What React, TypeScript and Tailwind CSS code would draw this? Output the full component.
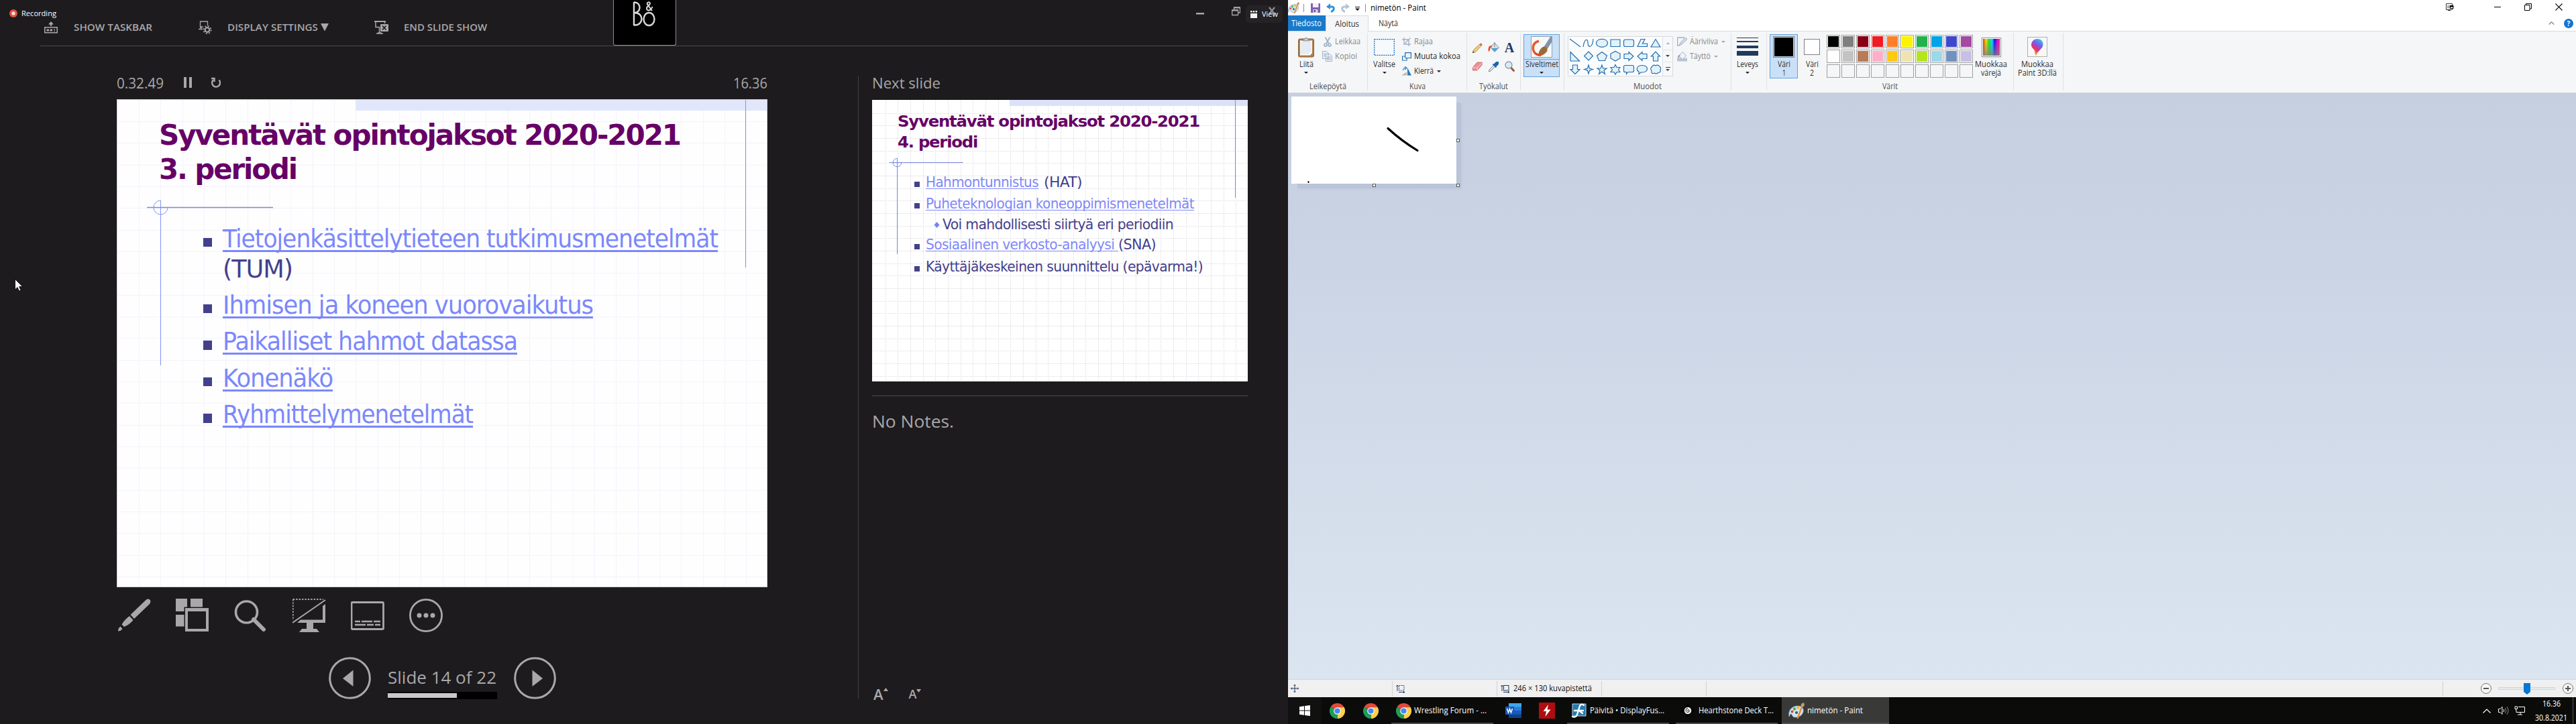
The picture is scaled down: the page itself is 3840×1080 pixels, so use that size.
import React, { useLayoutEffect, useRef, useState } from "react";

/* Text squeezed or stretched horizontally so that it fills exactly `w` pixels. */
function T({ w, className = "", children }: { w: number; className?: string; children: React.ReactNode }) {
  const ref = useRef<HTMLSpanElement>(null);
  const [scale, setScale] = useState(1);
  useLayoutEffect(() => {
    if (ref.current && ref.current.offsetWidth) {
      const range = document.createRange();
      range.selectNodeContents(ref.current);
      const natural = range.getBoundingClientRect().width;
      if (natural) setScale((s) => (w * s) / natural);
    }
  }, [w]);
  return (
    <span className="inline-block shrink-0 whitespace-pre" style={{ width: w }}>
      <span ref={ref} className={`inline-block origin-left whitespace-pre ${className}`} style={{ transform: `scaleX(${scale})` }}>
        {children}
      </span>
    </span>
  );
}

/* ------------------------------ slides ------------------------------ */

function SlideBackdrop({ small = false }: { small?: boolean }) {
  const W = small ? 560 : 970;
  const H = small ? 420 : 728;
  const step = small ? 18.67 : 32.33;
  const off = small ? 19.5 : 33;
  const vs = Array.from({ length: 29 }, (_, i) => Math.round(off + i * step) + 0.5).filter((v) => v < W);
  const hs = Array.from({ length: 22 }, (_, i) => Math.round(off + i * step) + 0.5).filter((v) => v < H);
  const grid = small ? "#dcdce2" : "#f3f3fb";
  const dash = small ? "1 1" : undefined;
  const cx = small ? 37.5 : 65.5;
  const cy = small ? 93.5 : 161.5;
  const r = small ? 6.3 : 10.5;
  const line = small ? "#7d8fe8" : "#8492f5";
  return (
    <svg className={small ? "absolute left-0 top-0" : "absolute -left-px -top-px"} width={W} height={H} viewBox={`0 0 ${W} ${H}`} fill="none">
      <defs>
        <pattern id="dither" width="2" height="2" patternUnits="userSpaceOnUse">
          <rect width="2" height="2" fill="#eef2fd" />
          <rect width="1" height="1" fill="#c6d2f3" />
          <rect x="1" y="1" width="1" height="1" fill="#c6d2f3" />
        </pattern>
      </defs>
      {vs.map((v) => <path key={`v${v}`} d={`M${v} 0V${H}`} stroke={grid} strokeDasharray={dash} />)}
      {hs.map((v) => <path key={`h${v}`} d={`M0 ${v}H${W}`} stroke={grid} strokeDasharray={dash} />)}
      {small ? <rect x="205" width="355" height="9" fill="url(#dither)" /> : <rect x="356" width="614" height="17" fill="#e1e6fb" />}
      <path d={small ? "M541.5 0V146" : "M937.5 0V251"} stroke={line} />
      <path d={small ? "M25.5 93.5H135.5" : "M45 161.5H233"} stroke="#7c88de" strokeWidth={small ? 1 : 1.5} />
      <path d={`M${cx} ${cy - r}V${small ? 230 : 397}`} stroke={line} />
      <path d={`M${cx} ${cy - r}A${r} ${r} 0 1 0 ${cx + r} ${cy}`} stroke={line} />
    </svg>
  );
}

function Bullet({ w, link, tail, tailW = 0 }: { w: number; link?: string; tail?: string; tailW?: number }) {
  return (
    <li className="flex">
      <span className="mr-4 mt-[21px] h-[13.5px] w-[13px] shrink-0 bg-[#44408c]" />
      <span className="flex flex-col">
        <T w={w} className="text-[#7b88fa] underline decoration-[#7b88fa] decoration-[2.6px] underline-offset-[4px] [text-decoration-skip-ink:none]">{link}</T>
        {tail && <T w={tailW}>{tail}</T>}
      </span>
    </li>
  );
}

function CurrentSlide() {
  return (
    <div className="relative mt-[15px] h-[728px] w-[970px] overflow-hidden border border-[#cfced2] bg-[#fefeff]">
      <SlideBackdrop />
      <div className="relative pl-[64px] pt-[27px] font-['DejaVu_Sans'] text-[#660066]">
        <h1 className="-ml-[2px] flex flex-col text-[43px] font-bold leading-[51px] tracking-[-0.05em]">
          <T w={777}>Syventävät opintojaksot 2020-2021</T>
          <T w={205}>3. periodi</T>
        </h1>
        <ul className="mt-[55.5px] flex flex-col gap-[9.4px] pl-[64px] text-[37px] leading-[45px] tracking-[-0.03em] text-[#44408c]">
          <Bullet w={738} link="Tietojenkäsittelytieteen tutkimusmenetelmät" tail="(TUM)" tailW={104} />
          <Bullet w={552} link="Ihmisen ja koneen vuorovaikutus" />
          <Bullet w={439} link="Paikalliset hahmot datassa" />
          <Bullet w={164} link="Konenäkö" />
          <Bullet w={373} link="Ryhmittelymenetelmät" />
        </ul>
      </div>
    </div>
  );
}

const smallLink = "text-[#7f88f8] underline decoration-1 underline-offset-[2px] [text-decoration-skip-ink:none]";

function SmallBullet() {
  return <span className="mr-[9px] mt-[12px] h-2 w-2 shrink-0 bg-[#44408c]" />;
}

function NextSlide() {
  return (
    <div className="relative mt-4 h-[420px] w-[560px] overflow-hidden bg-white">
      <SlideBackdrop small />
      <div className="relative pl-[38px] pt-[17px] font-['DejaVu_Sans'] text-[#660066]">
        <h2 className="flex flex-col text-[23.5px] font-bold leading-[30.6px] tracking-[-0.05em]">
          <T w={450}>Syventävät opintojaksot 2020-2021</T>
          <T w={119}>4. periodi</T>
        </h2>
        <ul className="mt-[31.5px] pl-[25px] text-[22px] leading-[26px] tracking-[-0.03em] text-[#44408c]">
          <li className="flex h-8"><SmallBullet /><T w={168} className={smallLink}>Hahmontunnistus</T><span className="w-2" /><T w={57}>(HAT)</T></li>
          <li className="flex h-[31px]"><SmallBullet /><T w={400} className={smallLink}>Puheteknologian koneoppimismenetelmät</T></li>
          <li className="flex h-[30px] pl-[29px] text-[21px]">
            <svg className="mr-1 mt-[9px]" width="9" height="9" viewBox="0 0 8 9"><path d="M4 0L8 4.5L4 9L0 4.5Z" fill="#6f86f5" /></svg>
            <T w={344}>Voi mahdollisesti siirtyä eri periodiin</T>
          </li>
          <li className="flex h-[33px]"><SmallBullet /><T w={287} className={smallLink}>{"Sosiaalinen verkosto-analyysi "}</T><T w={56}>(SNA)</T></li>
          <li className="flex"><SmallBullet /><T w={413}>Käyttäjäkeskeinen suunnittelu (epävarma!)</T></li>
        </ul>
      </div>
    </div>
  );
}

/* -------------------------- presenter view -------------------------- */

const G = "#a9a7a9";

function PresenterHeader() {
  return (
    <header className="relative flex h-[68px] justify-between">
      <div className="flex h-[51px] items-end pl-[66px] text-[14.5px] font-semibold leading-5 text-[#a9a7a9]">
        <svg width="20" height="20" viewBox="0 0 20 20" fill={G} className="mr-6">
          <path d="M10 1L14 5.5H11V8H9V5.5H6Z" />
          <path d="M0 9H20V18.500H0ZM1.500 10.500V17H18.500V10.500Z" fillRule="evenodd" />
          <path d="M3.500 12.500H7V15.500H3.500ZM8.500 12.500H12V15.500H8.500ZM14.500 12H16V13.500H14.500ZM14.500 14.500H16V16H14.500Z" />
        </svg>
        <T w={117}>SHOW TASKBAR</T>
        <svg width="20" height="20" viewBox="0 0 20 20" className="ml-[69px] mr-[23px]" fill="none" stroke={G}>
          <path d="M7 9H2.500V1H13.500V7" strokeWidth="1.300" />
          <path d="M0 12.500H6M2 10.500L5 10.500" strokeWidth="1.500" />
          <circle cx="13" cy="13.500" r="3.300" strokeWidth="2.200" />
          <circle cx="13" cy="13.500" r="5.600" strokeWidth="1.800" strokeDasharray="2 2.400" />
        </svg>
        <T w={135}>DISPLAY SETTINGS</T>
        <svg width="12" height="12" viewBox="0 0 12 12" className="mb-1 ml-1"><path d="M0 0H12L6 11.500Z" fill={G} /></svg>
        <svg width="22" height="20" viewBox="0 0 22 20" className="ml-[68px] mr-[22px]" fill="none" stroke={G}>
          <path d="M0 1H17" strokeWidth="2" />
          <path d="M2 1V9.500H8M15.500 2V4M7.500 9.500V18M3 19H13M5 18H11" strokeWidth="1.500" />
          <rect x="9" y="5" width="12" height="11" rx="1" fill={G} stroke="none" />
          <path d="M12 7.500L17.500 13.500M17.500 7.500L12 13.500" stroke="#1d1b1e" strokeWidth="1.700" />
        </svg>
        <T w={124}>END SLIDE SHOW</T>
      </div>
      <div className="flex items-start gap-10 pr-[19px] pt-[10px]">
        <svg width="13" height="14" viewBox="0 0 13 14"><rect y="9" width="12" height="2.500" fill={G} /></svg>
        <svg width="13" height="14" viewBox="0 0 13 14" fill="none" stroke={G} strokeWidth="1.300" className="mr-[2px]">
          <path d="M3.500 4V1H12.500V9H9.500" /><path d="M3.500 1.500H12.500" strokeWidth="2" /><path d="M.7 5H9.500V12.500H.7Z" /><path d="M.7 5.500H9.500" strokeWidth="2" />
        </svg>
        <svg width="10" height="12" viewBox="0 0 10 12"><path d="M1 1L9 11M9 1L1 11" stroke="#8d8b8e" strokeWidth="2.200" /></svg>
      </div>

      {/* screen-sharing overlays */}
      <div className="absolute left-[14px] top-[12px] flex h-4 items-center gap-[6px] text-[11px] leading-4 text-white">
        <span className="h-3 w-3 rounded-full bg-[radial-gradient(circle,#ffe3dd_0_22%,#e2503f_40%_75%,#a83a30_100%)]" />
        <T w={52}>Recording</T>
      </div>
      <div className="absolute right-[8px] top-[8px] flex h-[26px] w-[55px] items-center rounded-md bg-[#ffffff0a] pl-[7px] text-[11px] text-white">
        <svg width="10" height="11" viewBox="0 0 10 11" fill="#f2f2f2" className="mr-[7px]"><path d="M0 0H2.500V2.500H0ZM3.700 0H6.200V2.500H3.700ZM7.500 0H10V2.500H7.500ZM0 4H10V11H0Z" /></svg>
        <T w={24}>View</T>
      </div>
      <div className="absolute left-[914px] top-0 h-[68px] w-[94px] rounded-b-[3px] border border-t-0 border-[#8c8c8c] bg-black">
        <svg width="92" height="67" viewBox="0 0 92 67" fill="none" stroke="#d8d8d8" strokeWidth="2.400">
          <path d="M30 3V38M30 3.500H31C41 3.500 41 19 31 19H30M31 19C45 19 45 37.500 31 37.500H30" />
          <ellipse cx="52.500" cy="28.500" rx="8" ry="9.500" />
          <path d="M57 16L50 6.500C48.500 3 54.500 2 54 5.500C53.500 8 48.500 9 49 13C49.500 17 55.500 16 57.500 10" strokeWidth="2" />
        </svg>
      </div>
    </header>
  );
}

function PresenterTools() {
  return (
    <div className="ml-px mt-[17px] flex h-[50px] items-center gap-[37px]">
      <svg width="50" height="50" viewBox="0 0 50 50" fill={G}>
        <path d="M43 1.500Q47-1 49 2.500Q50 5 48 8L25 30L19.500 24Z" />
        <path d="M18 26L23.500 32Q18 39 10 42L6.500 38.500Q10 32 18 26Z" /><path d="M4.500 41.500L7.500 45Q5 48.500 1 48.500Q1 44 4.500 41.500Z" />
      </svg>
      <svg width="50" height="50" viewBox="0 0 50 50" fill={G}>
        <path d="M0 0H17V12.500H12.500V19H0ZM22 0H40V12.500H22ZM0 24H12.500V41.500H0Z" />
        <path d="M14 14H49V49H14ZM18 19V45H45V19Z" fillRule="evenodd" />
      </svg>
      <svg width="50" height="50" viewBox="0 0 50 50" fill="none" stroke={G}>
        <circle cx="18.500" cy="20" r="16" strokeWidth="3.600" /><path d="M29 31L44 46" strokeWidth="6" strokeLinecap="round" />
      </svg>
      <svg width="50" height="50" viewBox="0 0 50 50" fill={G}>
        <path d="M.8 1H46M.8 1V32" stroke={G} strokeWidth="1.800" strokeDasharray="2.400 2" fill="none" />
        <path d="M0 36L49 2" stroke={G} strokeWidth="2" />
        <path d="M49 8V36H31V45H36L40 50H10L14 45H21V36H7L12 31.500H45V11Z" />
      </svg>
      <svg width="50" height="50" viewBox="0 0 50 50" fill="none" stroke={G}>
        <rect x="1" y="5.500" width="47.500" height="40" rx="1.500" strokeWidth="2.800" />
        <path d="M6 34H14M16 34H32M34 34H44M6 39H22M24 39H34M36 39H44" strokeWidth="2.400" />
      </svg>
      <svg width="50" height="50" viewBox="0 0 50 50" fill={G}>
        <circle cx="25" cy="25" r="23.600" fill="none" stroke={G} strokeWidth="2.800" />
        <circle cx="15" cy="25" r="3.500" /><circle cx="25" cy="25" r="3.500" /><circle cx="35" cy="25" r="3.500" />
      </svg>
    </div>
  );
}

function PresenterNav() {
  return (
    <div className="ml-[316px] mt-[37px] flex h-[63px] items-center gap-[25px]">
      <svg width="63" height="63" viewBox="0 0 63 63"><circle cx="31.500" cy="31.500" r="29.800" fill="none" stroke={G} strokeWidth="3" /><path d="M36.500 19.500V44L21 32Z" fill={G} /></svg>
      <div className="flex h-full w-[163px] flex-col text-[25px] leading-[30px] text-[#a9a7a9]">
        <div className="mt-[15px] h-[37px]"><T w={162}>Slide 14 of 22</T></div>
        <div className="h-[11px] bg-black py-[2px]"><div className="h-[7px] w-[103px] bg-[#c9c7c9]" /></div>
      </div>
      <svg width="63" height="63" viewBox="0 0 63 63"><circle cx="31.500" cy="31.500" r="29.800" fill="none" stroke={G} strokeWidth="3" /><path d="M27.500 19.500V44L43 32Z" fill={G} /></svg>
    </div>
  );
}

function Presenter() {
  return (
    <section className="relative h-[1080px] w-[1920px] shrink-0 overflow-hidden bg-[#1d1b1e]">
      <PresenterHeader />
      <div className="ml-[60px] h-px w-[1800px] bg-[#4c4a4d]" />
      <div className="flex h-[1011px] text-[#a9a7a9]">
        <main className="w-[1279px] shrink-0 pl-[174px] pt-[44px]">
          <div className="flex h-5 w-[970px] items-center text-[22px] leading-5">
            <T w={70}>0.32.49</T>
            <span className="ml-[30px] h-4 w-1 bg-[#a9a7a9]" /><span className="ml-1 h-4 w-1 bg-[#a9a7a9]" />
            <svg width="15" height="17" viewBox="0 0 15 17" className="ml-7" fill="none" stroke={G} strokeWidth="2.400"><path d="M12.500 4.500A6 6 0 1 1 4 4.200" /><path d="M1 2H5.500V7" /></svg>
            <span className="ml-auto flex"><T w={51}>16.36</T></span>
          </div>
          <CurrentSlide />
          <PresenterTools />
          <PresenterNav />
        </main>
        <div className="mt-[45px] h-[928px] w-px bg-[#444245]" />
        <aside className="flex flex-col items-start pb-[33px] pl-5 pt-[44px]">
          <div className="flex h-5 items-center text-[22px] leading-5"><T w={102}>Next slide</T></div>
          <NextSlide />
          <div className="mt-[21px] h-px w-[560px] bg-[#4c4a4d]" />
          <div className="mt-[22px] h-[30px] text-[26px] leading-[30px]"><T w={122}>No Notes.</T></div>
          <div className="mt-auto flex h-6 items-end gap-[31px] pl-[2px] font-semibold leading-6">
            <span className="flex text-[22px]">A<svg width="7" height="6" viewBox="0 0 7 6" className="mt-[3px]"><path d="M3.500 0L7 5H0Z" fill={G} /></svg></span>
            <span className="flex text-[18px]">A<svg width="7" height="6" viewBox="0 0 7 6" className="mt-[5px]"><path d="M3.500 5L7 0H0Z" fill={G} /></svg></span>
          </div>
        </aside>
      </div>
      <svg width="12" height="19" viewBox="0 0 12 19" className="absolute left-[22px] top-[416px]"><path d="M.5.5V16L4 12.600L6.500 18L9 17L6.600 11.600H11.500Z" fill="#fff" stroke="#000" strokeWidth=".8" /></svg>
    </section>
  );
}

/* ------------------------------ Paint ------------------------------- */

function PaletteIcon({ size }: { size: number }) {
  return (
    <svg width={size} height={size} viewBox="0 0 24 24" className="shrink-0">
      <path d="M1 21C-1 11 6 5 14 5C21 5 23 10 22 14C20 20 15 22 10 22C5 22 6 17 3.500 17C1.500 17 2.500 21 1 21Z" fill="#cfe6f4" stroke="#6da5c9" strokeWidth=".8" />
      <circle cx="5.500" cy="13.500" r="2" fill="#e0442e" /><circle cx="9" cy="9.500" r="2.200" fill="#4cae3f" /><circle cx="14.500" cy="7.500" r="2.200" fill="#f2b92b" /><circle cx="12" cy="15" r="2" fill="#34546c" />
      <path d="M13.500 24L20 6" stroke="#ea8a2e" strokeWidth="2.400" /><path d="M18.500 6L19 2L23 0L24 4L21.500 7Z" fill="#c69a6a" />
    </svg>
  );
}

function Caret({ color = "#222", className = "" }: { color?: string; className?: string }) {
  return <svg width="6" height="3" viewBox="0 0 6 3" className={`shrink-0 ${className}`}><path d="M0 0H6L3 3Z" fill={color} /></svg>;
}

function PaintTitle() {
  return (
    <div className="flex h-[23px] items-start justify-between bg-white">
      <div className="flex h-[23px] items-center">
        <PaletteIcon size={17} />
        <span className="ml-[6px] h-3 w-px bg-[#8d8d8d]" />
        <svg width="14" height="14" viewBox="0 0 14 14" className="ml-[10px] mt-px"><path d="M0 0H14V14H0Z" fill="#8361b4" /><path d="M3 0H11.500V6H3Z" fill="#f3f1f8" /><path d="M3.500 9H10.500V14H3.500Z" fill="#cfd8e6" /><path d="M5 10H7V13H5Z" fill="#55407c" /></svg>
        <svg width="14" height="14" viewBox="0 0 14 14" className="ml-[9px]" fill="none" stroke="#3094dc"><path d="M2 5H8.500C12.500 5 12.500 11 7 12.500" strokeWidth="3" /><path d="M6 0L0 5L6 9Z" fill="#3094dc" stroke="none" /></svg>
        <svg width="14" height="14" viewBox="0 0 14 14" className="ml-[7px]" fill="none" stroke="#b5c3d4"><path d="M12 5H5.500C1.500 5 1.500 11 7 12.500" strokeWidth="3" /><path d="M8 0L14 5L8 9Z" fill="#b5c3d4" stroke="none" /></svg>
        <svg width="7" height="6" viewBox="0 0 7 6" className="ml-2 mt-[3px]"><path d="M0 0H7V1H0ZM0 2.500H7L3.500 6Z" fill="#111" /></svg>
        <span className="ml-2 h-3 w-px bg-[#8d8d8d]" />
        <span className="ml-[7px] flex text-[12px] leading-4 text-black"><T w={83}>nimetön - Paint</T></span>
      </div>
      <div className="flex items-center pr-5 pt-[5px]">
        <svg width="12" height="11" viewBox="0 0 12 11" fill="none" stroke="#333"><path d="M.5.500H9.500V3M.5.500V9.500H9.500V8M3 10.500H7" /><path d="M3 3V7.500M5 3V7.500" strokeWidth=".8" /><rect x="6" y="3" width="5.500" height="5" fill="#000" stroke="none" /><path d="M7 5.500H10.500V7H7Z" fill="#fff" stroke="none" /></svg>
        <svg width="10" height="11" viewBox="0 0 10 11" className="ml-[60px]"><path d="M0 5.500H10" stroke="#000" /></svg>
        <svg width="11" height="11" viewBox="0 0 11 11" className="ml-[35px]" fill="none" stroke="#000"><path d="M.5 2.500H8V10.500H.5ZM2.500 2.500V.5H10.500V8H8" /></svg>
        <svg width="11" height="11" viewBox="0 0 11 11" className="ml-[35px]"><path d="M.5.500L10.500 10.500M10.500.500L.5 10.500" stroke="#000" strokeWidth="1.100" /></svg>
      </div>
    </div>
  );
}

function PaintTabs() {
  return (
    <div className="flex h-6 items-start border-b border-[#dadbdc] bg-white text-[12px] leading-[23px] text-[#303030]">
      <div className="flex h-[23px] w-14 bg-[#1979ca] pl-[5px] text-white"><T w={45}>Tiedosto</T></div>
      <div className="flex h-6 w-16 border border-b-0 border-[#dadbdc] bg-[#f5f6f7] pl-[13px]"><T w={36}>Aloitus</T></div>
      <div className="flex pl-[15px]"><T w={29}>Näytä</T></div>
      <div className="ml-auto flex h-[23px] items-center pr-1">
        <svg width="9" height="5" viewBox="0 0 9 5" className="mr-[14px]"><path d="M.7 4.500L4.500.700L8.300 4.500" fill="none" stroke="#8a8a8a" strokeWidth="1.300" /></svg>
        <span className="flex h-[14px] w-[14px] items-center justify-center rounded-full bg-[#1374d0] text-[10px] font-bold leading-3 text-white">?</span>
      </div>
    </div>
  );
}

function Group({ w, label, lw = 0, children }: { w: number; label?: string; lw?: number; children: React.ReactNode }) {
  return (
    <>
      <div className="flex h-[91px] shrink-0 flex-col" style={{ width: w }}>
        <div className="flex h-[74px]">{children}</div>
        <div className="flex h-4 justify-center leading-4 text-[#505050]">{label && <T w={lw}>{label}</T>}</div>
      </div>
      <div className="mt-[2px] h-[86px] w-px shrink-0 bg-[#dfe1e3]" />
    </>
  );
}

function Big({ w, lines, widths, caret = true, children }: { w: number; lines: string[]; widths: number[]; caret?: boolean; children: React.ReactNode }) {
  return (
    <div className="flex shrink-0 flex-col items-center pt-[6px] leading-[13px] text-[#303030]" style={{ width: w }}>
      <div className="mb-[2px] flex h-[34px] items-center justify-center">{children}</div>
      {lines.map((l, i) => <div key={l} className="flex h-[13px]"><T w={widths[i]}>{l}</T></div>)}
      {caret && <Caret className="mt-[5px]" />}
    </div>
  );
}

function Row({ icon, label, w, disabled, caret }: { icon: React.ReactNode; label: string; w: number; disabled?: boolean; caret?: boolean }) {
  return (
    <div className={`flex h-[22px] items-center leading-[22px] ${disabled ? "text-[#86888b]" : "text-[#262626]"}`}>
      <span className="mr-1 flex w-[15px] shrink-0 justify-center">{icon}</span>
      <T w={w}>{label}</T>
      {caret && <Caret className="ml-[5px]" color={disabled ? "#a5a7aa" : "#222"} />}
    </div>
  );
}

const SHAPES = [
  "M2 4L18 16", "M2 16C4 3 9 3 9 10C9 18 16 18 17 4", "M10 4.500A7.500 5.800 0 1 0 10 16A7.500 5.800 0 1 0 10 4.500Z", "M3 5H17V15.500H3Z",
  "M5 5H15Q17.500 5 17.500 7.500V13Q17.500 15.500 15 15.500H5Q2.500 15.500 2.500 13V7.500Q2.500 5 5 5Z", "M3 15.500L8 4.500H14L10.500 11H17.500V15.500Z", "M10 4.500L17 16H3Z",
  "M3 3.500V17H16.500Z", "M10 3L16.500 9.500L10 16L3.500 9.500Z", "M10 3.500L17.500 9L14.500 16.500H5.500L2.500 9Z", "M10 2.500L17 6V13L10 17L3 13V6Z",
  "M3 6.500H10V3.500L17 10L10 16.500V13.500H3Z", "M17 6.500H10V3.500L3 10L10 16.500V13.500H17Z", "M6.500 17V10H3.500L10 3L16.500 10H13.500V17Z",
  "M6.500 3V9.500H3L10 16.500L17 9.500H13.500V3Z", "M10 3L11.500 8L16.500 9.500L11.500 11L10 16L8.500 11L3.500 9.500L8.500 8Z", "M10 3L11.800 8H17L13 11L14.500 16.500L10 13L5.500 16.500L7 11L3 8H8.200Z",
  "M10 2.500L12 6.500H17L14.500 10L17 13.500H12L10 17L8 13.500H3L5.500 10L3 6.500H8Z", "M4.500 3.500H15.500Q17.500 3.500 17.500 5.500V11.500Q17.500 13.500 15.500 13.500H9L6.500 16.500V13.500H4.500Q2.500 13.500 2.500 11.500V5.500Q2.500 3.500 4.500 3.500Z",
  "M10 3.500C20 3.500 20 14 10 14L8 14L5 16.500V13C0 10 2 3.500 10 3.500Z", "M5 5Q7 2 10 4Q14 2 15.500 5Q19 7 17 10Q18 14 14 14.500Q11 17 8 15Q3 17 4 12Q1 8 5 5Z",
];

const TOP = ["bg-[#000000]", "bg-[#7f7f7f]", "bg-[#880015]", "bg-[#ed1c24]", "bg-[#ff7f27]", "bg-[#fff200]", "bg-[#22b14c]", "bg-[#00a2e8]", "bg-[#3f48cc]", "bg-[#a349a4]"];
const MID = ["bg-[#ffffff]", "bg-[#c3c3c3]", "bg-[#b97a57]", "bg-[#ffaec9]", "bg-[#ffc90e]", "bg-[#efe4b0]", "bg-[#b5e61d]", "bg-[#99d9ea]", "bg-[#7092be]", "bg-[#c8bfe7]"];

function Swatches() {
  return (
    <div className="mt-[5px] grid h-[64px] w-[218px] shrink-0 grid-cols-10 gap-[2px]">
      {[...TOP, ...MID].map((c) => <span key={c} className="h-5 w-5 border border-[#a0a0a0] bg-white p-px"><span className={`block h-4 w-4 ${c}`} /></span>)}
      {TOP.map((c) => <span key={`e${c}`} className="h-5 w-5 border border-[#a0a0a0] bg-[#f5f6f7]" />)}
    </div>
  );
}

function Ribbon() {
  return (
    <div className="flex h-[92px] border-b border-[#d5d7da] bg-[#f5f6f7] text-[12px]">
      <Group w={118} label="Leikepöytä" lw={55}>
        <Big w={54} lines={["Liitä"]} widths={[21]}>
          <svg width="24" height="31" viewBox="0 0 24 31"><rect x=".5" y="3" width="23" height="27" rx="2" fill="#b0804a" stroke="#8a6136" /><path d="M3 5.500H21V24L18 27.500H3Z" fill="#fbfcfd" /><path d="M4 9H20M4 12H20M4 15H20M4 18H20M4 21H20M4 24H17" stroke="#bccbdc" /><path d="M7 6V3.500H9.500Q12 -1 14.500 3.500H17V6Z" fill="#c9ccd0" stroke="#666" strokeWidth=".8" /></svg>
        </Big>
        <div className="-ml-[3px] pt-1">
          <Row disabled label="Leikkaa" w={38} icon={<svg width="12" height="15" viewBox="0 0 12 15" fill="none" stroke="#9fb0c8" strokeWidth="1.700"><path d="M2.500.500L8 10M9.500.500L4 10" /><circle cx="3" cy="12" r="2" /><circle cx="9" cy="12" r="2" /></svg>} />
          <Row disabled label="Kopioi" w={33} icon={<svg width="15" height="16" viewBox="0 0 15 16" fill="#eef2f8" stroke="#a3b3cb"><path d="M.5.500H6L9 3V11.500H.500ZM5.500 4.500H11L14.500 7.500V15.500H5.500Z" /><path d="M7 9H13M7 11H13M7 13H13M2 4H5M2 6H5M2 8H5" /></svg>} />
        </div>
      </Group>
      <Group w={147} label="Kuva" lw={24}>
        <Big w={49} lines={["Valitse"]} widths={[33]}>
          <svg width="31" height="25" viewBox="0 0 31 25"><rect x=".7" y=".7" width="29.600" height="23.600" fill="#f6fafd" stroke="#1e6db5" strokeWidth="1.300" strokeDasharray="2 1.200" /></svg>
        </Big>
        <div className="pl-px pt-1">
          <Row disabled label="Rajaa" w={28} icon={<svg width="13" height="13" viewBox="0 0 13 13" fill="none" stroke="#9fb0c8" strokeWidth="1.300"><path d="M3 0V10H13M0 3H10V13M12.500.500L4 9" /></svg>} />
          <Row label="Muuta kokoa" w={69} icon={<svg width="14" height="13" viewBox="0 0 14 13" fill="#fff" stroke="#1e6db5" strokeWidth="1.200"><path d="M.6 6H7V12H.6Z" /><path d="M4.600.6H13.400V8.500H4.600Z" fill="#eaf4fb" /></svg>} />
          <Row label="Kierrä" w={29} caret icon={<svg width="15" height="14" viewBox="0 0 15 14"><path d="M0 13.500L8 8V13.500Z" fill="#b9bcc0" /><path d="M9 2L15 13.500H9Z" fill="#2b7fb8" /><path d="M2.500 6Q2.500 2 6.500 2.500M5 0L8 2.500L5 5" fill="none" stroke="#2a86d0" strokeWidth="1.300" /></svg>} />
        </div>
      </Group>
      <Group w={79} label="Työkalut" lw={43}>
        <div className="ml-[3px] mt-[10px] grid h-14 w-[72px] grid-cols-3 grid-rows-2 place-items-center">
          <svg width="15" height="15" viewBox="0 0 15 15"><path d="M0 15L1.500 10.500L10.500 2L13 4.500L4.500 13.500Z" fill="#f1cf6e" stroke="#8b6b33" strokeWidth=".7" /><path d="M10.500 2L12.500.200L15 2.700L13 4.500Z" fill="#cc6273" /><path d="M0 15L1 12.500L2.500 14Z" fill="#333" /></svg>
          <svg width="17" height="16" viewBox="0 0 17 16"><path d="M5 6L10 1L16.500 8L10 14.500L5 9Z" fill="#dbe6ef" stroke="#6c86a0" strokeWidth=".9" /><path d="M5.500 9L15.500 8.500L10 14Z" fill="#4fa0d8" /><path d="M7 5.500Q0 3 .500 13Q1.500 15 3 12Q3 8 7 5.500Z" fill="#e5532d" /><path d="M10 7V0" stroke="#777" strokeWidth=".9" /></svg>
          <span className="font-['Liberation_Serif'] text-[20px] font-bold leading-4 text-[#1f3864]">A</span>
          <svg width="16" height="14" viewBox="0 0 16 14"><path d="M1 9L8 1H15.500L15 5L8 13H1.500Z" fill="#ee8f93" stroke="#c0666b" strokeWidth=".8" /><path d="M1 9H8.500L15.500 1.500M8.500 9V12.500" stroke="#fbd0d0" fill="none" /></svg>
          <svg width="15" height="15" viewBox="0 0 15 15"><path d="M0 15L1 12L8 5L10 7L3 14Z" fill="#dbe8f2" stroke="#5d6f80" strokeWidth=".8" /><path d="M6.500 3.500L11.500 8.500M8 5L11 1.500Q14-.5 14.500 2Q14.800 3.500 10 7Z" stroke="#1d66ad" strokeWidth="2" fill="#1d66ad" /></svg>
          <svg width="15" height="16" viewBox="0 0 15 16"><path d="M9.500 10L13.500 14.500" stroke="#8a5f3c" strokeWidth="2.800" strokeLinecap="round" /><circle cx="6" cy="6" r="5" fill="#d7ebf7" stroke="#8a96a5" strokeWidth="1.300" /></svg>
        </div>
      </Group>
      <Group w={64}>
        <div className="ml-1 mt-1 h-[64px] w-[54px] border border-[#62a2e4] bg-[linear-gradient(#c9e0f7_36px,#62a2e4_36px,#62a2e4_37px,#c9e0f7_37px)]">
          <div className="-mt-[5px]">
            <Big w={52} lines={["Siveltimet"]} widths={[49]}>
              <svg width="32" height="32" viewBox="0 0 32 32"><rect x=".5" y=".5" width="31" height="31" fill="#f7f8f8" stroke="#8ea0b2" /><path d="M12 7Q2 10 3.500 20Q5 28 15 28" fill="none" stroke="#e65a2b" strokeWidth="3.500" /><path d="M20 15L29 1H31V9L24 20Z" fill="#8195ab" /><path d="M11 29Q12 18 20 15Q25 17 24.500 22Q19 30 11 29Z" fill="#9a6b3a" /><path d="M4 20Q6 28 17 27L14 30Q5 29 4 20Z" fill="#e6481c" /></svg>
            </Big>
          </div>
        </div>
      </Group>
      <Group w={248} label="Muodot" lw={42}>
        <div className="ml-[5px] mt-[7px] flex h-[60px] w-[157px] shrink-0 border border-[#d9dadc] bg-[#fafcfe]">
          <div className="-mt-px grid h-[60px] w-[140px] grid-cols-7 grid-rows-3">
            {SHAPES.map((d, i) => <svg key={i} width="20" height="20" viewBox="0 0 20 20"><path d={d} fill={i < 2 ? "none" : "#e3f1f8"} stroke="#1f6cb0" strokeWidth="1.150" /></svg>)}
          </div>
          <div className="flex w-[15px] flex-col border-l border-[#e1e3e5] bg-[#f7f8f9]">
            <div className="flex h-5 items-center justify-center border-b border-[#e1e3e5]"><svg width="5" height="3" viewBox="0 0 5 3"><path d="M0 3H5L2.500 0Z" fill="#a9adb5" /></svg></div>
            <div className="flex h-[19px] items-center justify-center border-b border-[#e1e3e5]"><Caret color="#333e50" /></div>
            <div className="flex h-5 flex-col items-center justify-center gap-[2px]"><span className="h-px w-[7px] bg-[#333e50]" /><Caret color="#333e50" /></div>
          </div>
        </div>
        <div className="pl-[6px] pt-1">
          <Row disabled caret label="Ääriviiva" w={42} icon={<svg width="15" height="14" viewBox="0 0 15 14"><path d="M.6 1H11M.6 1V13H3" fill="none" stroke="#9fb0c8" strokeWidth="1.300" /><path d="M3 13L5 8.500L12.500 1L15 3.500L7 11Z" fill="#d3dbe6" stroke="#93a5bd" strokeWidth=".9" /></svg>} />
          <Row disabled caret label="Täyttö" w={31} icon={<svg width="16" height="16" viewBox="0 0 16 16"><path d="M0 11H16V16H0Z" fill="#b9c4d6" /><path d="M4 6L9 1L14.500 7L9 13L4 9Z" fill="#eff3f8" stroke="#9aabc2" /><path d="M5 5Q0 6 1 12L4 9Z" fill="#9aabc2" /></svg>} />
        </div>
      </Group>
      <Group w={52}>
        <Big w={48} lines={["Leveys"]} widths={[32]}>
          <svg width="32" height="28" viewBox="0 0 32 28" fill="#1f3a5f"><path d="M0 0H32V1H0ZM0 5H32V7H0ZM0 12H32V16H0ZM0 20H32V27H0Z" /></svg>
        </Big>
      </Group>
      <Group w={367} label="Värit" lw={23}>
        <div className="ml-1 mt-1 h-[66px] w-[42px] shrink-0 border border-[#62a2e4] bg-[#c9e0f7]">
          <div className="-mt-[5px]">
            <Big w={40} lines={["Väri", "1"]} widths={[19, 5]} caret={false}><span className="h-8 w-8 border border-[#808080] bg-[#c9e0f7] p-px"><span className="block h-7 w-7 bg-black" /></span></Big>
          </div>
        </div>
        <Big w={42} lines={["Väri", "2"]} widths={[19, 6]} caret={false}><span className="h-6 w-6 border border-[#808080] bg-white" /></Big>
        <span className="w-px shrink-0" />
        <Swatches />
        <Big w={54} lines={["Muokkaa", "värejä"]} widths={[48, 30]} caret={false}>
          <span className="relative flex h-[29px] w-[29px] items-center justify-center border border-[#999] bg-white shadow-sm"><span className="h-[25px] w-[25px] bg-[linear-gradient(to_top,#808080cc,transparent),linear-gradient(to_right,#ff2000,#ffe000_18%,#00f020_36%,#00e0ff_54%,#1000ff_70%,#ff00e0_88%,#ff0040)]" /></span>
        </Big>
      </Group>
      <Group w={73}>
        <Big w={70} lines={["Muokkaa", "Paint 3D:llä"]} widths={[48, 58]} caret={false}>
          <span className="flex h-[30px] w-[30px] items-center justify-center border border-[#b0b0b0] bg-[#f8f8f8]">
            <svg width="20" height="25" viewBox="0 0 20 25">
              <defs><linearGradient id="p3d" x1=".8" y1="0" x2=".3" y2="1"><stop offset="0" stopColor="#1fd3e6" /><stop offset=".35" stopColor="#7a5cf0" /><stop offset=".65" stopColor="#e0326e" /><stop offset="1" stopColor="#ffc400" /></linearGradient></defs>
              <path d="M10 0C16 0 19 4 18.500 9C18 15 11 17 8 25C6 24 7 19 5 16C3 14 1 12 1 9C1 4 5 0 10 0Z" fill="url(#p3d)" />
            </svg>
          </span>
        </Big>
      </Group>
    </div>
  );
}

function PaintCanvas() {
  const handle = "absolute h-[5px] w-[5px] border border-[#555] bg-white";
  return (
    <div className="h-[874px] bg-[linear-gradient(#c5cfe0,#cad3e4_25%,#dbe5f0)] pl-[5px] pt-[5px]">
      <div className="relative h-[130px] w-[246px] bg-white shadow-[8px_8px_0_-1px_#b9c4d8,9px_9px_3px_-1px_#bec9db]">
        <svg width="246" height="130" viewBox="0 0 246 130"><path d="M144 47.500Q164 66 188 80.500" fill="none" stroke="#000" strokeWidth="3.200" strokeLinecap="round" /><path d="M25.500 126V129M24 127.500H27" stroke="#000" /></svg>
        <span className={`${handle} left-[246px] top-[63px]`} />
        <span className={`${handle} left-[246px] top-[130px]`} />
        <span className={`${handle} left-[121px] top-[130px]`} />
      </div>
    </div>
  );
}

function SizeIcon({ dashed }: { dashed?: boolean }) {
  return <svg width="14" height="13" viewBox="0 0 14 13" fill="none" stroke="#1f3a5f"><path d="M2 10V1M.5 3L2 1L3.500 3M4 11.500H13M11 10L13 11.500L11 13" /><rect x="4.500" y="1.500" width="7.500" height="7.500" strokeDasharray={dashed ? "1.500 1" : undefined} /></svg>;
}

function StatusBar() {
  const sep = "h-[23px] w-px bg-[#d2d2d2]";
  return (
    <div className="flex h-[27px] items-center border-t border-[#d5d5d5] bg-[#f0f0f0] text-[12px] leading-5 text-[#111]">
      <span className="flex w-[155px] pl-1"><svg width="12" height="12" viewBox="0 0 12 12" fill="none" stroke="#1f3a5f"><path d="M6 0V12M0 6H12M4.500 2L6 .5L7.500 2M4.500 10L6 11.500L7.500 10M2 4.500L.5 6L2 7.500M10 4.500L11.500 6L10 7.500" /></svg></span>
      <span className={sep} />
      <span className="flex w-[155px] pl-[5px]"><SizeIcon dashed /></span>
      <span className={sep} />
      <span className="flex w-[155px] items-center gap-[5px] pl-[5px]"><SizeIcon /><T w={117}>246 × 130 kuvapistettä</T></span>
      <span className={sep} />
      <span className="w-[155px]" />
      <span className={sep} />
      <span className={`ml-auto ${sep}`} />
      <div className="flex w-[198px] items-center pl-14">
        <svg width="16" height="16" viewBox="0 0 16 16"><circle cx="8" cy="8" r="7.500" fill="#f8f8f8" stroke="#777" /><path d="M4 8H12" stroke="#555" strokeWidth="2" /></svg>
        <div className="relative ml-[10px] h-1 w-[85px] border border-[#d0d6d6] bg-[#e7eaea]">
          <svg width="10" height="17" viewBox="0 0 10 17" className="absolute left-[37px] top-[-7px]"><path d="M0 0H10V13L5 17L0 13Z" fill="#0078d7" /></svg>
        </div>
        <svg width="16" height="16" viewBox="0 0 16 16" className="ml-[11px]"><circle cx="8" cy="8" r="7.500" fill="#f8f8f8" stroke="#777" /><path d="M4 8H12M8 4V12" stroke="#555" strokeWidth="2" /></svg>
      </div>
    </div>
  );
}

function Chrome() {
  return (
    <svg width="23" height="23" viewBox="0 0 24 24" className="shrink-0">
      <path d="M12 12L1.600 6A12 12 0 0 1 22.400 6Z" fill="#e04a3a" />
      <path d="M12 12L22.400 6A12 12 0 0 1 12 24Z" fill="#fcd04b" />
      <path d="M12 12V24A12 12 0 0 1 1.600 6Z" fill="#1f9d58" />
      <path d="M12 6.500H22.700L16.500 15L12 24L16.800 14.500Z" fill="#fcd04b" />
      <circle cx="12" cy="12" r="5.500" fill="#fff" /><circle cx="12" cy="12" r="4.300" fill="#4a86ee" />
    </svg>
  );
}

function Taskbar() {
  const running = "flex h-10 items-center border-b-2 border-[#4b4b4b] pt-[2px]";
  return (
    <div className="flex h-10 bg-[#0b0b0a] text-[12px] leading-5 text-white">
      <div className="flex w-[50px] items-center bg-[#111] pl-[17px]"><svg width="16" height="16" viewBox="0 0 16 16" fill="#fff"><path d="M0 2.200L7 1.200V7.600H0ZM8 1L16 0V7.600H8ZM0 8.500H7V14.800L0 13.800ZM8 8.500H16V16L8 15Z" /></svg></div>
      <div className="flex w-[50px] items-center pl-3"><Chrome /></div>
      <div className="flex w-[50px] items-center pl-3"><Chrome /></div>
      <div className={`ml-1 w-[152px] pl-[7px] ${running}`}><Chrome /><span className="w-1" /><T w={108}>Wrestling Forum - ...</T></div>
      <svg width="24" height="24" viewBox="0 0 24 24" className="ml-[18px] mt-2"><path d="M5 1H24V23H5Z" fill="#2b7cd3" /><path d="M5 1H24V6.500H5Z" fill="#41a5ee" /><path d="M5 12H24V17.500H5Z" fill="#185abd" /><path d="M5 17.500H24V23H5Z" fill="#103f91" /><path d="M0 6H13V18H0Z" fill="#185abd" /><path d="M2.500 9L4.500 15L6.500 9.500L8.500 15L10.500 9" fill="none" stroke="#fff" strokeWidth="1.500" /></svg>
      <svg width="24" height="24" viewBox="0 0 24 24" className="ml-[26px] mt-2"><path d="M0 0H24V24H0Z" fill="#b00d10" /><path d="M14 3L6.500 13H11L9.500 21L17.500 10.500H12.500Z" fill="#fff" /></svg>
      <div className={`ml-[18px] w-[152px] pl-[6px] ${running}`}>
        <svg width="24" height="24" viewBox="0 0 24 24"><path d="M2 2H22V20H2Z" fill="#2479b0" stroke="#b9d9ee" /><path d="M19 4Q14 0 12 8L9 18Q7 23 2 21M5 12H18M12 12L17 16" fill="none" stroke="#fff" strokeWidth="2.400" strokeLinecap="round" /></svg>
        <span className="w-1" /><T w={111}>Päivitä • DisplayFus...</T>
      </div>
      <div className={`ml-[10px] w-[152px] pl-[6px] ${running}`}>
        <svg width="24" height="24" viewBox="0 0 24 24"><path d="M12 1L15 6L23 12L15 18L12 23L9 18L1 12L9 6Z" fill="#000" /><circle cx="12" cy="12" r="5.300" fill="#eee" /><path d="M12 12.500Q11 10.500 13 10.500Q15.500 11.500 13.500 14Q10 15.500 9 12Q9 8.500 12 8.200" fill="none" stroke="#222" strokeWidth="1" /></svg>
        <span className="w-1" /><T w={112}>Hearthstone Deck T...</T>
      </div>
      <div className="ml-[6px] flex h-10 w-[160px] items-center border-b-2 border-[#4f4f4e] bg-[#393a38] pl-[10px] pt-[2px]"><PaletteIcon size={24} /><span className="w-1" /><T w={83}>nimetön - Paint</T></div>
      <div className="ml-auto flex items-center pr-1">
        <svg width="12" height="7" viewBox="0 0 12 7" className="mr-[11px]"><path d="M.5 6.500L6 1L11.500 6.500" fill="none" stroke="#fff" strokeWidth="1.200" /></svg>
        <svg width="16" height="14" viewBox="0 0 16 14" className="mr-2" fill="none" stroke="#fff"><path d="M.5 4.500H3L6 1.500V12.500L3 9.500H.500Z" /><path d="M8 5Q9.500 7 8 9" /><path d="M10.500 3Q13 7 10.500 11M13 1Q17 7 13 13" stroke="#8a8a8a" /></svg>
        <svg width="16" height="14" viewBox="0 0 16 14" fill="none" stroke="#fff"><path d="M6 1.500H15.500V9.500H3V7M9 9.500V13M5 13H12M1 1V4.500H4.500V1ZM2.700 4.500V7" /></svg>
        <div className="ml-[15px] flex h-10 w-12 flex-col items-center justify-between text-[12px] leading-[19px]"><T w={27}>16.36</T><T w={48}>30.8.2021</T></div>
        <span className="ml-2 h-10 w-px bg-[#555]" />
      </div>
    </div>
  );
}

export default function App() {
  return (
    <div className="flex h-[1080px] w-[3840px] overflow-hidden font-['Open_Sans','Noto_Sans',sans-serif]">
      <Presenter />
      <section className="flex h-[1080px] w-[1920px] shrink-0 flex-col">
        <PaintTitle />
        <PaintTabs />
        <Ribbon />
        <PaintCanvas />
        <StatusBar />
        <Taskbar />
      </section>
    </div>
  );
}
